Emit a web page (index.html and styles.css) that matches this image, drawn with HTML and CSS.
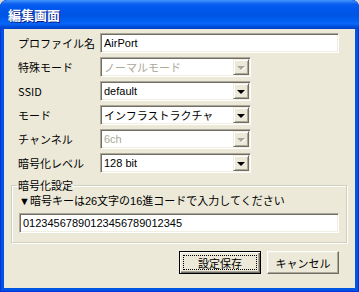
FILE: index.html
```html
<!DOCTYPE html>
<html lang="ja">
<head>
    <meta charset="UTF-8">
    <title>編集画面</title>
    <link rel="stylesheet" href="styles.css">
</head>
<body>
    <div class="window">
        <div class="titlebar">
            <span class="title">編集画面</span>
        </div>
        <div class="client">
            <div class="form">
                <label>プロファイル名</label>
                <div class="field edit wide">AirPort</div>

                <label>特殊モード</label>
                <div class="field combo disabled">
                    <span class="value">ノーマルモード</span>
                    <span class="drop"></span>
                </div>

                <label>SSID</label>
                <div class="field combo">
                    <span class="value">default</span>
                    <span class="drop"></span>
                </div>

                <label>モード</label>
                <div class="field combo">
                    <span class="value">インフラストラクチャ</span>
                    <span class="drop"></span>
                </div>

                <label>チャンネル</label>
                <div class="field combo disabled">
                    <span class="value">6ch</span>
                    <span class="drop"></span>
                </div>

                <label>暗号化レベル</label>
                <div class="field combo">
                    <span class="value">128 bit</span>
                    <span class="drop"></span>
                </div>
            </div>

            <fieldset class="group">
                <legend>暗号化設定</legend>
                <p class="hint">▼暗号キーは26文字の16進コードで入力してください</p>
                <div class="field edit">01234567890123456789012345</div>
            </fieldset>

            <div class="buttons">
                <button class="btn default"><span class="focus">設定保存</span></button>
                <button class="btn cancel">キャンセル</button>
            </div>
        </div>
    </div>
</body>
</html>
```

FILE: styles.css
```css
body {
    margin: 0;
    padding: 0;
    background-color: #d8d8d8;
    font-family: "Liberation Sans", "Noto Sans CJK JP", sans-serif;
    font-size: 11px;
    color: #000;
}
.window {
    width: 359px;
    height: 292px;
    box-sizing: border-box;
    background-color: #0054e3;
    border-radius: 7px 7px 0 0;
    box-shadow: inset 0 0 0 1px #0831d9;
    padding: 0 4px 4px;
    display: flex;
    flex-direction: column;
    overflow: hidden;
}
.titlebar {
    height: 29px;
    margin: 0 -4px;
    padding-left: 8px;
    display: flex;
    align-items: center;
    border-radius: 7px 7px 0 0;
    background: linear-gradient(to bottom, #3d95ff 0, #2a7cf5 2px, #0a5ff0 4px, #0058ee 8px, #0054e3 15px, #0060f3 21px, #0a66f8 24px, #0052e0 26px, #0040c8 29px);
}
.title {
    color: #fff;
    font-family: "Noto Sans CJK JP", sans-serif;
    font-weight: bold;
    font-size: 13px;
    text-shadow: 1px 1px #0a1883;
}
.client {
    flex: 1;
    background-color: #ece9d8;
    padding: 4px 8px 0 7px;
}
.form {
    display: grid;
    grid-template-columns: 82px auto;
    row-gap: 4px;
    align-items: center;
    margin-left: 7px;
}
.form label {
    font-family: "Noto Sans CJK JP", sans-serif;
    color: #000;
}
.field {
    height: 20px;
    box-sizing: border-box;
    background-color: #fff;
    border: 1px solid;
    border-color: #aca899 #fff #fff #aca899;
    box-shadow: inset 1px 1px #716f64, inset -1px -1px #f1efe2;
    display: flex;
    align-items: center;
    padding: 0 2px 0 3px;
    white-space: nowrap;
}
.wide {
    width: 239px;
}
.combo {
    width: 151px;
    padding-right: 1px;
    justify-content: space-between;
}
.combo.disabled .value {
    color: #aca899;
}
.drop {
    width: 16px;
    height: 16px;
    box-sizing: border-box;
    background-color: #ece9d8;
    border: 1px solid;
    border-color: #f1efe2 #716f64 #716f64 #f1efe2;
    box-shadow: inset 1px 1px #fff, inset -1px -1px #aca899;
    display: flex;
    align-items: center;
    justify-content: center;
}
.drop::after {
    content: "";
    border-left: 4px solid transparent;
    border-right: 4px solid transparent;
    border-top: 4px solid #000;
    margin-top: 1px;
}
.disabled .drop::after {
    border-top-color: #aca899;
    filter: drop-shadow(1px 1px 0 #fff);
}
.group {
    margin: 6px 0 0;
    padding: 2px 7px 9px;
    border: 1px solid #d0d0bf;
    box-shadow: inset 1px 1px #fff, 1px 1px #fff;
}
.group legend {
    padding: 0 1px;
    margin-left: -2px;
    font-family: "Noto Sans CJK JP", sans-serif;
    line-height: 13px;
}
.hint {
    margin: 0 0 5px;
    line-height: 14px;
}
.buttons {
    display: flex;
    justify-content: flex-end;
    gap: 6px;
    margin: 8px 8px 0 0;
}
.btn {
    height: 23px;
    box-sizing: border-box;
    font-family: "Noto Sans CJK JP", sans-serif;
    font-size: 11px;
    color: #000;
    background-color: #ece9d8;
    border: 1px solid;
    border-color: #fff #716f64 #716f64 #fff;
    box-shadow: inset -1px -1px #aca899, inset 1px 1px #f1efe2;
    padding: 0;
}
.btn.cancel {
    width: 72px;
}
.btn.default {
    width: 82px;
    border: 1px solid #000;
    box-shadow: inset 1px 1px #fff, inset -1px -1px #716f64, inset -2px -2px #aca899;
    padding: 3px;
    display: flex;
}
.focus {
    flex: 1;
    border: 1px dotted #000;
    display: flex;
    align-items: center;
    justify-content: center;
}
```
